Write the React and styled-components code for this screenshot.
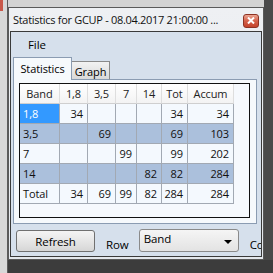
import React from 'react'
import styled, { createGlobalStyle } from 'styled-components'

const GlobalStyle = createGlobalStyle`
	body {
		margin: 0;
		font-family: 'Open Sans', 'Noto Sans', sans-serif;
		font-size: 11px;
		letter-spacing: -0.1px;
		color: #000;
	}
`

const columns = [
	{ key: 'band', title: 'Band', width: 40 },
	{ key: 'b18', title: '1,8', width: 28 },
	{ key: 'b35', title: '3,5', width: 28 },
	{ key: 'b7', title: '7', width: 21 },
	{ key: 'b14', title: '14', width: 25 },
	{ key: 'tot', title: 'Tot', width: 26 },
	{ key: 'accum', title: 'Accum', width: 46 },
]

const rows = [
	{ band: '1,8', b18: '34', b35: '', b7: '', b14: '', tot: '34', accum: '34' },
	{ band: '3,5', b18: '', b35: '69', b7: '', b14: '', tot: '69', accum: '103' },
	{ band: '7', b18: '', b35: '', b7: '99', b14: '', tot: '99', accum: '202' },
	{ band: '14', b18: '', b35: '', b7: '', b14: '82', tot: '82', accum: '284' },
	{ band: 'Total', b18: '34', b35: '69', b7: '99', b14: '82', tot: '284', accum: '284' },
]

const App = () => {
	return (
		<>
			<GlobalStyle />
			<Desktop>
				<Window>
					<TitleBar>
						<Title>Statistics for GCUP - 08.04.2017 21:00:00 ...</Title>
						<CloseButton>
							<svg width="8" height="7" viewBox="0 0 8 7">
								<path d="M1 0.5 L7 6.5 M7 0.5 L1 6.5" stroke="#fff" strokeWidth="2" />
							</svg>
						</CloseButton>
					</TitleBar>
					<Client>
						<MenuBar>
							<MenuItem>File</MenuItem>
						</MenuBar>
						<TabArea>
							<TabStrip>
								<Tab $active>Statistics</Tab>
								<Tab>Graph</Tab>
							</TabStrip>
							<TabPanel>
								<Grid>
									<Row>
										{columns.map((c) => (
											<HeadCell key={c.key} style={{ width: c.width }}>
												{c.title}
											</HeadCell>
										))}
									</Row>
									{rows.map((r, i) => (
										<Row key={r.band}>
											{columns.map((c, j) => (
												<Cell
													key={c.key}
													style={{ width: c.width }}
													$alt={i % 2 === 1}
													$left={j === 0}
													$selected={i === 0 && j === 0}
												>
													{r[c.key]}
												</Cell>
											))}
										</Row>
									))}
								</Grid>
							</TabPanel>
						</TabArea>
						<BottomBar>
							<Button>Refresh</Button>
							<Label>Row</Label>
							<Combo>
								<span>Band</span>
								<svg width="8" height="4" viewBox="0 0 8 4">
									<path d="M0 0 L8 0 L4 4 Z" fill="#000" />
								</svg>
							</Combo>
							<Label>Col</Label>
						</BottomBar>
					</Client>
				</Window>
			</Desktop>
		</>
	)
}

const Desktop = styled.div`
	width: 273px;
	height: 273px;
	overflow: hidden;
	box-sizing: border-box;
	padding: 7px 0 0 8px;
	background:
		linear-gradient(#c9584a, #c9584a) 0 0 / 3px 11px no-repeat,
		linear-gradient(to right, #d8d8d8 7px, #5c5c5c 7px 8px) 0 0 / 8px 100% no-repeat,
		linear-gradient(#d3d3d3, #d3d3d3) 8px 0 / 256px 7px no-repeat,
		linear-gradient(#3c3c3c, #3c3c3c) 0 260px / 100% 13px no-repeat,
		#4a4a4a;
`
const Window = styled.div`
	width: 256px;
	height: 253px;
	box-sizing: border-box;
	border: 1px solid #5a5a5a;
	background: linear-gradient(#eef0f3, #e4e8ed);
	padding: 0 1px 2px 1px;
	display: flex;
	flex-direction: column;
`
const TitleBar = styled.div`
	height: 23px;
	flex: none;
	display: flex;
	align-items: center;
	padding: 0 3px 0 3px;
`
const Title = styled.div`
	flex: 1;
	white-space: nowrap;
	overflow: hidden;
	font-size: 11px;
	color: #111;
	letter-spacing: -0.3px;
`
const CloseButton = styled.div`
	width: 16px;
	height: 14px;
	flex: none;
	box-sizing: border-box;
	margin-top: 2px;
	border: 1px solid #8e3324;
	border-radius: 3px;
	background: linear-gradient(#eba693, #d4614a 50%, #c4432c);
	display: flex;
	align-items: center;
	justify-content: center;
`
const Client = styled.div`
	flex: 1;
	border: 1px solid #3a3a3a;
	background: #d6e0ec;
	display: flex;
	flex-direction: column;
	overflow: hidden;
`
const MenuBar = styled.div`
	height: 24px;
	flex: none;
	display: flex;
	align-items: center;
	padding-left: 17px;
`
const MenuItem = styled.span`
	font-size: 11.5px;
`
const TabArea = styled.div`
	margin: 1px 4px 0 2px;
	display: flex;
	flex-direction: column;
`
const TabStrip = styled.div`
	display: flex;
	align-items: flex-end;
	height: 23px;
	position: relative;
	z-index: 1;
	margin-bottom: -1px;
`
const Tab = styled.div`
	box-sizing: border-box;
	height: ${(p) => (p.$active ? '23px' : '19px')};
	width: ${(p) => (p.$active ? '59px' : '38px')};
	text-align: center;
	padding-top: ${(p) => (p.$active ? '3px' : '2px')};
	border: 1px solid ${(p) => (p.$active ? '#8b9cb2' : '#8a8a8a')};
	border-bottom: ${(p) => (p.$active ? 'none' : '1px solid #8b9cb2')};
	border-left: ${(p) => (p.$active ? '1px solid #8b9cb2' : 'none')};
	background: ${(p) => (p.$active ? '#f6f9fc' : 'linear-gradient(#f2f2f2, #d9d9d9)')};
	font-size: 11px;
	line-height: 15px;
`
const TabPanel = styled.div`
	height: 145px;
	box-sizing: border-box;
	border: 1px solid #8b9cb2;
	background: #f6f9fc;
	padding: 3px 6px 5px 5px;
	display: flex;
`
const Grid = styled.div`
	flex: 1;
	border: 1px solid #111;
	background: #f6f9fd;
	display: flex;
	flex-direction: column;
`
const Row = styled.div`
	display: flex;
	height: 20px;
`
const HeadCell = styled.div`
	box-sizing: border-box;
	height: 20px;
	background: linear-gradient(#ffffff, #f3f3f3);
	border-right: 1px solid #dedede;
	border-bottom: 1px solid #cfcfcf;
	display: flex;
	align-items: center;
	justify-content: center;
	font-size: 11px;
	color: #222;
`
const Cell = styled.div`
	box-sizing: border-box;
	height: 20px;
	border-right: 1px solid #a2a9b3;
	border-bottom: 1px solid #a2a9b3;
	background: ${(p) => (p.$selected ? '#3399ff' : p.$alt ? '#abc0dc' : '#f4f9fe')};
	color: ${(p) => (p.$selected ? '#fff' : '#111')};
	display: flex;
	align-items: center;
	justify-content: ${(p) => (p.$left ? 'flex-start' : 'flex-end')};
	padding: ${(p) => (p.$left ? '0 0 0 3px' : '0 4px 0 0')};
	font-size: 11px;
`
const BottomBar = styled.div`
	flex: 1;
	display: flex;
	align-items: flex-start;
	padding: 6px 0 0 5px;
	white-space: nowrap;
`
const Button = styled.div`
	width: 79px;
	height: 22px;
	flex: none;
	box-sizing: border-box;
	border: 1px solid #707070;
	border-radius: 3px;
	background: linear-gradient(#f4f4f4, #e6e6e6 50%, #d6d6d6);
	display: flex;
	align-items: center;
	justify-content: center;
	font-size: 11.5px;
`
const Label = styled.span`
	margin: 7px 0 0 11px;
	font-size: 11.5px;
`
const Combo = styled.div`
	width: 100px;
	height: 23px;
	flex: none;
	margin: -1px 0 0 10px;
	box-sizing: border-box;
	border: 1px solid #8a8a8a;
	border-radius: 3px;
	background: linear-gradient(#f5f5f5, #e3e3e3);
	display: flex;
	align-items: flex-start;
	justify-content: space-between;
	padding: 1px 6px 0 4px;
	font-size: 11.5px;
	& svg {
		margin-top: 9px;
	}
`

export default App
